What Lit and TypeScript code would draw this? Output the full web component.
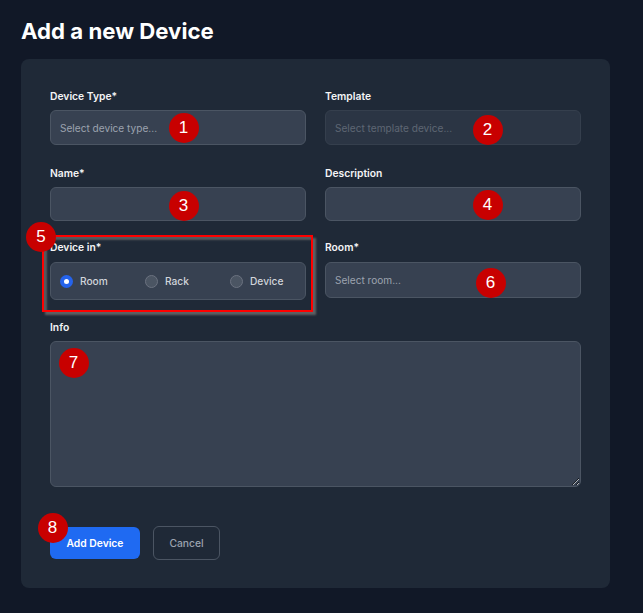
import { LitElement, html, css } from "lit";
import { customElement } from "lit/decorators.js";

const badges: [string, number, number][] = [
  ["1", 183.5, 127.5], ["2", 487.5, 129.5], ["3", 183.5, 205.5], ["4", 487.5, 204.5],
  ["5", 41, 237], ["6", 490.5, 282.5], ["7", 73.5, 362.5], ["8", 52.5, 527.5],
];

@customElement("app-root")
export class AppRoot extends LitElement {
  static styles = css`
    :host {
      display: block;
      position: relative;
      width: 643px;
      height: 613px;
      overflow: hidden;
      background: #111827;
      font-family: Inter, "Liberation Sans", sans-serif;
      color: #fff;
    }
    .page { padding: 16px 33px 25px 21px; display: flex; flex-direction: column; }
    h1 { margin: 0 0 14px; font-size: 22.2px; line-height: 29px; font-weight: 700; color: #fff; }
    .card {
      background: #1f2937;
      border-radius: 8px;
      height: 529px;
      box-sizing: border-box;
      padding: 30px 29px 0;
      display: flex;
      flex-direction: column;
    }
    .grid {
      display: grid;
      grid-template-columns: 256px 256px;
      column-gap: 19px;
    }
    .r1 { margin-bottom: 21px; }
    .r2 { margin-bottom: 19px; }
    .r3 { margin-bottom: 20px; }
    label, .lab {
      display: block;
      font-size: 10.3px;
      line-height: 14px;
      font-weight: 600;
      color: #f3f4f6;
      margin-bottom: 7px;
    }
    .lab.tall { margin-bottom: 8px; }
    input.text, textarea {
      display: block;
      width: 100%;
      box-sizing: border-box;
      height: 34.5px;
      margin: 0;
      padding: 1px 9px 0;
      background: #374151;
      border: 1px solid #4b5563;
      border-radius: 6px;
      font: 400 10.1px Inter, "Liberation Sans", sans-serif;
      color: #fff;
      outline: none;
    }
    input.text::placeholder { color: #9ca3af; opacity: 1; }
    input.text:disabled { opacity: 0.5; }
    input.room { height: 36px; padding-top: 0; }
    textarea { height: 146px; }
    .radios {
      display: grid;
      grid-template-columns: repeat(3, 1fr);
      column-gap: 19px;
      align-items: center;
      height: 38px;
      box-sizing: border-box;
      padding: 0 9px;
      background: #374151;
      border: 1px solid #4b5563;
      border-radius: 6px;
    }
    .radio { display: flex; align-items: center; gap: 7px; font-size: 10.2px; font-weight: 500; color: #d1d5db; }
    .dot {
      width: 13px; height: 13px; box-sizing: border-box; border-radius: 50%;
      background: #4b5563; border: 1px solid #6b7280; flex: none;
    }
    .dot.on {
      background: #2563eb; border: 0;
      display: flex; align-items: center; justify-content: center;
    }
    .dot.on::after { content: ""; width: 5px; height: 5px; border-radius: 50%; background: #fff; }
    .actions { display: flex; align-items: center; gap: 13px; margin-top: 39px; }
    button {
      font: 600 10.3px Inter, "Liberation Sans", sans-serif;
      border-radius: 6px;
      margin: 0;
      padding: 0;
    }
    .primary { width: 90px; height: 32px; background: #1f6af2; border: 0; color: #fff; }
    .secondary { width: 67px; height: 34px; background: transparent; border: 1px solid #4b5563; color: #9ca3af; font-weight: 500; }
    .mark {
      position: absolute; left: 42px; top: 235px; width: 271px; height: 77px;
      box-sizing: border-box; border: 2px solid #f00;
      box-shadow: 3px 3px 2px rgba(110,110,110,.8), inset 3px 3px 2px rgba(110,110,110,.7);
    }
    .badge {
      position: absolute; width: 30px; height: 30px; margin: -15px 0 0 -15px; border-radius: 50%;
      background: #c80000; color: #fff;
      display: flex; align-items: center; justify-content: center;
      font: 400 17px "Liberation Sans", sans-serif;
    }
  `;

  render() {
    return html`
      <div class="page">
        <h1>Add a new Device</h1>
        <div class="card">
          <div class="grid r1">
            <div><label>Device Type*</label><input class="text" placeholder="Select device type..." /></div>
            <div><label>Template</label><input class="text" disabled placeholder="Select template device..." /></div>
          </div>
          <div class="grid r2">
            <div><label>Name*</label><input class="text" /></div>
            <div><label>Description</label><input class="text" /></div>
          </div>
          <div class="grid r3">
            <div>
              <div class="lab tall">Device in*</div>
              <div class="radios">
                <div class="radio"><span class="dot on"></span>Room</div>
                <div class="radio"><span class="dot"></span>Rack</div>
                <div class="radio"><span class="dot"></span>Device</div>
              </div>
            </div>
            <div><label class="lab tall">Room*</label><input class="text room" placeholder="Select room..." /></div>
          </div>
          <div>
            <label>Info</label>
            <textarea></textarea>
          </div>
          <div class="actions">
            <button class="primary">Add Device</button>
            <button class="secondary">Cancel</button>
          </div>
        </div>
      </div>
      <div class="mark"></div>
      ${badges.map(
        ([n, x, y]) => html`<div class="badge" style="left:${x}px;top:${y}px">${n}</div>`
      )}
    `;
  }
}
